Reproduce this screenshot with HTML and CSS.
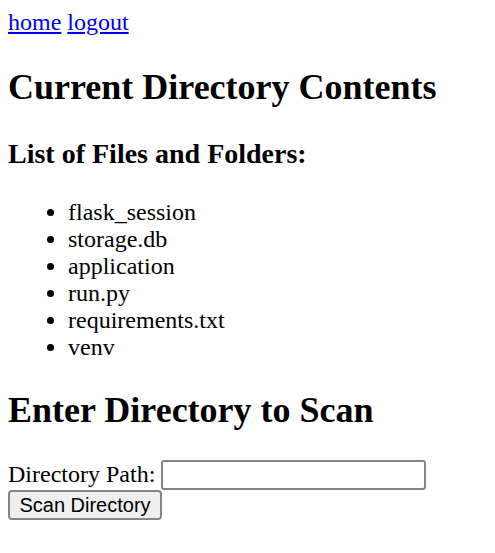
FILE: index.html
```html
<!DOCTYPE html>
<html lang="en">
<head>
<meta charset="utf-8">
<title>Directory Contents</title>
<link rel="stylesheet" href="styles.css">
</head>
<body>
<div class="nav"><a href="#">home</a> <a href="#">logout</a></div>
<h2 class="title">Current Directory Contents</h2>
<h3 class="subtitle">List of Files and Folders:</h3>
<ul class="files">
<li>flask_session</li>
<li>storage.db</li>
<li>application</li>
<li>run.py</li>
<li>requirements.txt</li>
<li>venv</li>
</ul>
<h2 class="title title-scan">Enter Directory to Scan</h2>
<form class="scan-form">
<label class="label" for="path">Directory Path:</label> <input class="path-input" id="path" type="text"><br>
<button class="scan-btn" type="button">Scan Directory</button>
</form>
</body>
</html>
```
FILE: styles.css
```css
body {
  margin: 9px 8px;
  font-family: "Liberation Serif", "Times New Roman", serif;
  font-size: 24px;
  color: #000;
  background: #fff;
}
.nav a {
  color: #0000ee;
  text-decoration: underline;
}
.title {
  font-size: 36px;
  font-weight: bold;
  margin: 30px 0;
}
.title-scan {
  margin: 28px 0 29px;
}
.subtitle {
  font-size: 28px;
  font-weight: bold;
  margin: 30px 0 29px;
}
.files {
  margin: 29px 0 22px;
  padding-left: 60px;
}
.scan-form {
  margin: 0;
}
.path-input {
  box-sizing: border-box;
  width: 265px;
  height: 30px;
  border: 2px solid #858585;
  border-radius: 3px;
  padding: 1px 3px;
  font-family: "Liberation Sans", Arial, sans-serif;
  font-size: 20px;
  vertical-align: baseline;
}
.scan-btn {
  box-sizing: border-box;
  width: 154px;
  height: 30px;
  margin: 0;
  border: 2px solid #858585;
  border-radius: 4px;
  background: #efefef;
  padding: 0 8px;
  font-family: "Liberation Sans", Arial, sans-serif;
  font-size: 20px;
  color: #000;
}
```
